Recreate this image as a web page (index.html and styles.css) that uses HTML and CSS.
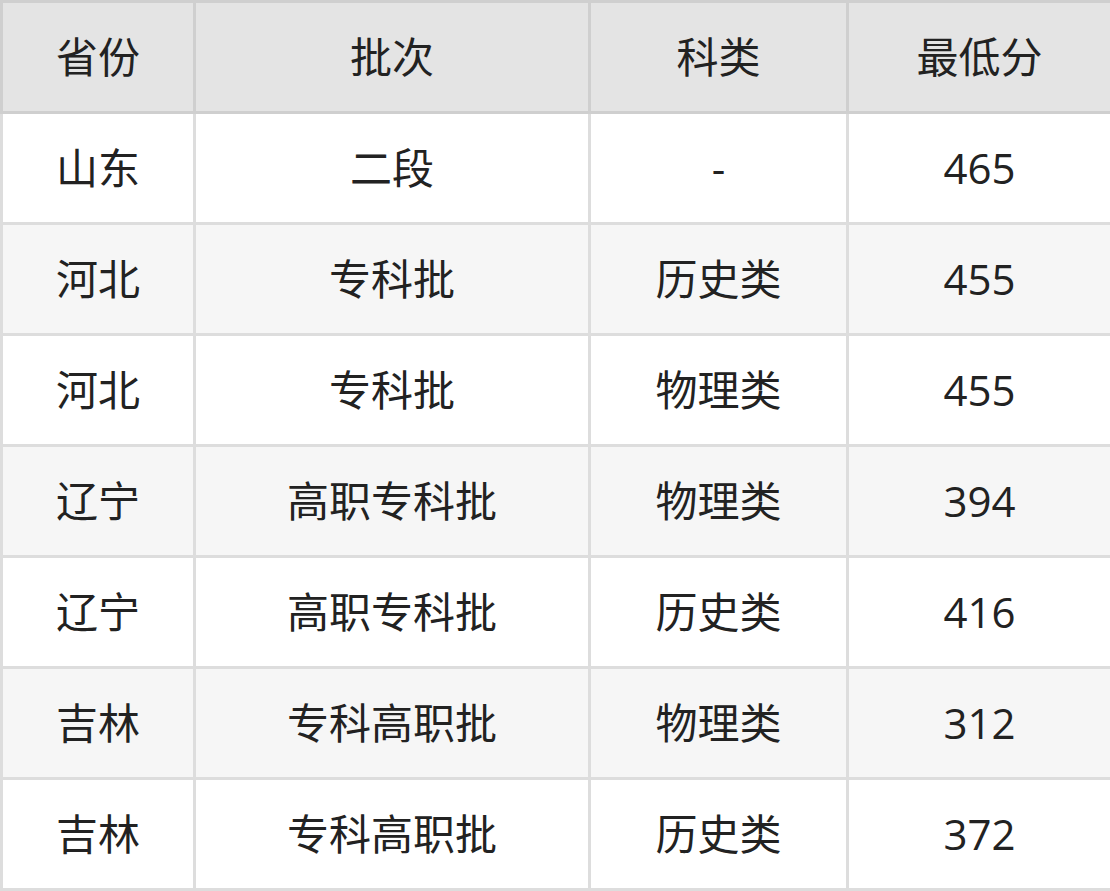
FILE: index.html
```html
<!DOCTYPE html>
<html lang="zh">
<head>
<meta charset="utf-8">
<link rel="stylesheet" href="styles.css">
</head>
<body>
<table class="score-table">
  <colgroup>
    <col class="c1"><col class="c2"><col class="c3"><col class="c4">
  </colgroup>
  <thead>
    <tr><th>省份</th><th>批次</th><th>科类</th><th>最低分</th></tr>
  </thead>
  <tbody>
    <tr><td>山东</td><td>二段</td><td>-</td><td>465</td></tr>
    <tr><td>河北</td><td>专科批</td><td>历史类</td><td>455</td></tr>
    <tr><td>河北</td><td>专科批</td><td>物理类</td><td>455</td></tr>
    <tr><td>辽宁</td><td>高职专科批</td><td>物理类</td><td>394</td></tr>
    <tr><td>辽宁</td><td>高职专科批</td><td>历史类</td><td>416</td></tr>
    <tr><td>吉林</td><td>专科高职批</td><td>物理类</td><td>312</td></tr>
    <tr><td>吉林</td><td>专科高职批</td><td>历史类</td><td>372</td></tr>
  </tbody>
</table>
</body>
</html>
```
FILE: styles.css
```css
html, body {
  margin: 0;
  padding: 0;
  background: #ffffff;
}
.score-table {
  width: 1110px;
  border-collapse: collapse;
  table-layout: fixed;
  font-family: "Open Sans", "Noto Sans CJK SC", sans-serif;
  font-size: 42px;
  color: #222222;
}
.c1 { width: 193px; }
.c2 { width: 395px; }
.c3 { width: 258px; }
.c4 { width: 264px; }
.score-table th,
.score-table td {
  height: 108px;
  padding: 0;
  text-align: center;
  vertical-align: middle;
  font-weight: normal;
  line-height: 1;
}
.score-table th {
  background: #e4e4e4;
  border: 3px solid #cfcfcf;
}
.score-table td {
  border: 3px solid #dddddd;
}
.score-table tbody tr:nth-child(even) td {
  background: #f6f6f6;
}
```
